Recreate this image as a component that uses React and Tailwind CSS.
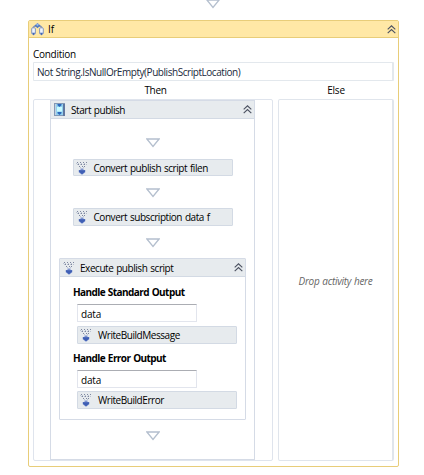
import React from 'react';

function Chevrons() {
  return (
    <svg width="9" height="9" viewBox="0 0 9 9" fill="none" stroke="#4d5362" strokeWidth="1.15" className="shrink-0">
      <path d="M.7 4.4 4.5.8l3.8 3.6M.7 8.2l3.8-3.6 3.8 3.6" />
    </svg>
  );
}

function Arrow() {
  return (
    <svg width="14" height="10" viewBox="0 0 14 10" fill="#fff" stroke="#b4bfce" strokeWidth="1.3" className="block shrink-0">
      <path d="M.9 1h12.2L7 8.4z" />
    </svg>
  );
}

function ActivityIcon() {
  return (
    <svg width="12" height="14" viewBox="0 0 12 14" className="shrink-0">
      <g fill="#7d869f">
        <path d="M1 1h1v1H1zM4 1h1v1H4zM7 1h1v1H7zM10 1h1v1h-1zM2 3h1v1H2zM5 3h1v1H5zM8 3h1v1H8zM3 5h1v1H3zM6 5h1v1H6zM8 5h1v1H8z" />
      </g>
      <path d="M0 2h1v1H0zM2 2h1v1H2zM5 2h1v1H5zM8 2h1v1H8zM1 3h1v1H1zM4 3h1v1H4zM7 3h1v1H7zM10 3h1v1h-1zM4 6h1v1H4zM7 6h1v1H7z" fill="#bcc4d2" />
      <path d="M4.5 7.5h3V9h1.8v2.2L6 13.7l-3.3-2.5V9h1.8z" fill="#7e94d0" />
      <path d="M3 9.3h6v1.4l-3 2.6-3-2.6z" fill="#3f5fb5" />
    </svg>
  );
}

function IfIcon() {
  return (
    <svg width="13" height="13" viewBox="0 0 13 13" className="shrink-0">
      <path d="M2 5.5C2.4 3.5 4 2.8 6.5 2.8s4.1.7 4.5 2.7" fill="none" stroke="#8493b4" strokeWidth="1.5" />
      <path d="m6.5 0 3 2.5-3 2.7-3-2.7z" fill="#527ac0" />
      <path d="m6.5.4 1.6 1.4L6.5 3 4.900 1.800z" fill="#9bb9e8" />
      <rect x=".7" y="4.8" width="3.7" height="6.4" rx="1" fill="#eef4ff" stroke="#8796b8" />
      <rect x="8.6" y="4.8" width="3.7" height="6.4" rx="1" fill="#eef4ff" stroke="#8796b8" />
      <path d="M1 9.800h3.100l-1.500 2.700zM8.900 9.800H12l-1.500 2.700z" fill="#4266b4" />
    </svg>
  );
}

function SequenceIcon() {
  return (
    <svg width="11" height="13" viewBox="0 0 11 13" className="shrink-0">
      <rect width="11" height="13" fill="#8297b5" />
      <path d="M1 1h1v11H1z" fill="#c3d2e2" />
      <path d="M9 1h2v12H9z" fill="#60779f" />
      <rect x="2" y="1" width="7" height="11" fill="#93d0ee" />
      <rect x="3" y="4" width="5" height="4.5" fill="#c9fbff" />
      <path d="M3.500 1h4v1.200L5.500 4l-2-1.800zM3.500 9h4v1.200l-2 1.800-2-1.800z" fill="#2b68bd" />
    </svg>
  );
}

function Activity({ label, className }) {
  return (
    <div className={`flex w-[160px] shrink-0 items-center rounded-[1px] border border-[#d3dae4] bg-[#e7ebee] pl-[2px] ${className}`}>
      <ActivityIcon />
      <span className="ml-[6px]">{label}</span>
    </div>
  );
}

function Header({ icon, label, gap }) {
  return (
    <div className="flex h-[18px] shrink-0 items-center border-b border-[#d3dae4] bg-[#e7ebee] pr-[2px] pl-[3px]">
      {icon}
      <span className={`grow ${gap}`}>{label}</span>
      <Chevrons />
    </div>
  );
}

function DataInput({ className }) {
  return (
    <div className={`ml-[17px] flex w-[120px] items-center border border-[#e2e5ed] border-t-[#abadb3] pt-px pl-[3px] tracking-[-0.2px] ${className}`}>data</div>
  );
}

export default function App() {
  return (
    <div className="flex h-[475px] w-[424px] flex-col overflow-hidden bg-white font-['Open_Sans','Noto_Sans',sans-serif] text-[10px] leading-[14px] tracking-[-0.45px] [word-spacing:0.7px] whitespace-nowrap text-black">
      <div className="ml-[206px] h-5">
        <div className="-mt-px"><Arrow /></div>
      </div>
      <div className="ml-7 flex h-[447px] w-[371px] flex-col rounded-[2px] border border-[#e8cd79]">
        <div className="flex h-[17px] shrink-0 items-center border-b border-[#e8cd79] bg-[#ffe8a6] pr-[2px] pl-[2px]">
          <IfIcon />
          <span className="ml-1 grow tracking-normal">If</span>
          <Chevrons />
        </div>
        <div className="mt-[9px] ml-1 h-[15px] shrink-0 tracking-[-0.28px]">Condition</div>
        <div className="mx-1 flex h-[19px] shrink-0 items-center rounded-[1px] border border-r-2 border-[#e3e8ed] pl-[3px] text-[#20293b]">
          Not String.IsNullOrEmpty(PublishScriptLocation)
        </div>
        <div className="mt-[2px] ml-1 flex gap-[5px]">
          <div className="flex w-[240px] flex-col">
            <div className="h-4 pl-[5px] text-center tracking-[-0.3px]">Then</div>
            <div className="flex h-[362px] justify-start rounded-[2px] border border-[#dfe4ed] pl-[16px]">
              <div className="flex h-[360px] w-[205px] flex-col border border-[#d5dbe6]">
                <Header icon={<SequenceIcon />} label="Start publish" gap="ml-[6px]" />
                <div className="flex grow flex-col items-center">
                  <div className="h-[40px] pt-[19px]"><Arrow /></div>
                  <Activity label="Convert publish script filen" className="h-[17px]" />
                  <div className="h-8 pt-[12px]"><Arrow /></div>
                  <Activity label="Convert subscription data f" className="h-[18px]" />
                  <div className="h-8 pt-[12px]"><Arrow /></div>
                  <div className="flex h-[162px] w-[187px] shrink-0 flex-col rounded-[1px] border border-[#d5dbe6]">
                    <Header icon={<ActivityIcon />} label="Execute publish script" gap="ml-[5px]" />
                    <div className="mt-[8px] ml-[13px] h-[19px] font-bold tracking-[-0.57px]">Handle Standard Output</div>
                    <DataInput className="h-[18px]" />
                    <Activity label="WriteBuildMessage" className="mt-1 ml-[17px] h-[18px]" />
                    <div className="mt-[7px] ml-[13px] h-[19px] font-bold tracking-[-0.57px]">Handle Error Output</div>
                    <DataInput className="h-[18px]" />
                    <Activity label="WriteBuildError" className="mt-[3px] ml-[17px] h-[18px]" />
                  </div>
                  <div className="pt-[11px]"><Arrow /></div>
                </div>
              </div>
            </div>
          </div>
          <div className="flex w-[116px] flex-col">
            <div className="h-4 text-center tracking-[-0.2px]">Else</div>
            <div className="flex h-[362px] items-center justify-center rounded-[2px] border border-r-2 border-[#e0e5ec] pt-[2px] tracking-[-0.3px] text-[#666] italic">
              Drop activity here
            </div>
          </div>
        </div>
      </div>
    </div>
  );
}
